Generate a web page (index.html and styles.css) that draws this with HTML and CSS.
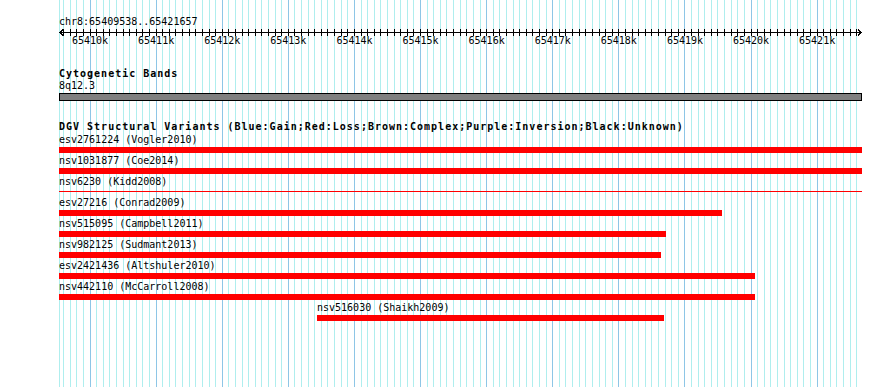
FILE: index.html
```html
<!DOCTYPE html>
<html lang="en">
<head>
  <meta charset="UTF-8">
  <meta name="viewport" content="width=device-width, initial-scale=1.0">
  <title>chr8:65409538..65421657</title>
  <link rel="stylesheet" href="styles.css">
</head>
<body>

<div class="browser">
  <div class="grid" id="grid"></div>

  <div class="tracks">
    <div class="ruler">
      <div class="locus">chr8:65409538..65421657</div>
      <svg class="axis" id="axis" width="803" height="8"></svg>
      <div class="ticklabels" id="ticklabels"></div>
    </div>

    <div class="track cyto">
      <div class="track-title">Cytogenetic Bands</div>
      <div class="band-name">8q12.3</div>
      <div class="band"></div>
    </div>

    <div class="track dgv">
      <div class="track-title">DGV Structural Variants (Blue:Gain;Red:Loss;Brown:Complex;Purple:Inversion;Black:Unknown)</div>
      <div id="features"></div>
    </div>
  </div>
</div>

<script>
  const START = 65409538, END = 65421657;
  const LEFT = 59.5, SCALE = 0.0661, EDGE = 59, RIGHT = 862;
  const px = bp => LEFT + (bp - START) * SCALE;

  const features = [
    { name: 'esv2761224', ref: 'Vogler2010', start: 65400000, end: 65430000 },
    { name: 'nsv1031877', ref: 'Coe2014', start: 65400000, end: 65430000 },
    { name: 'nsv6230', ref: 'Kidd2008', start: 65400000, end: 65430000, thin: true },
    { name: 'esv27216', ref: 'Conrad2009', start: 65400000, end: 65419560 },
    { name: 'nsv515095', ref: 'Campbell2011', start: 65400000, end: 65418714 },
    { name: 'nsv982125', ref: 'Sudmant2013', start: 65400000, end: 65418638 },
    { name: 'esv2421436', ref: 'Altshuler2010', start: 65400000, end: 65420060 },
    { name: 'nsv442110', ref: 'McCarroll2008', start: 65400000, end: 65420060 },
    { name: 'nsv516030', ref: 'Shaikh2009', start: 65413434, end: 65418683 }
  ];

  // grid lines + ruler ticks
  const grid = document.getElementById('grid');
  const axis = document.getElementById('axis');
  const ticklabels = document.getElementById('ticklabels');
  const ns = 'http://www.w3.org/2000/svg';
  let svg = '<line x1="1" y1="4.5" x2="802" y2="4.5"/>' +
            '<polyline points="4,1.5 1,4.5 4,7.5"/>' +
            '<polyline points="799,1.5 802,4.5 799,7.5"/>';

  const edgeLine = document.createElement('div');
  edgeLine.className = 'vline';
  edgeLine.style.left = EDGE + 'px';
  grid.appendChild(edgeLine);

  for (let bp = Math.ceil(START / 100) * 100; bp <= END; bp += 100) {
    const x = Math.floor(px(bp));
    const line = document.createElement('div');
    line.className = bp % 1000 === 0 ? 'vline major' : 'vline';
    line.style.left = x + 'px';
    grid.appendChild(line);

    const lx = x - EDGE + 0.5;
    svg += `<line x1="${lx}" y1="1" x2="${lx}" y2="8"/>`;

    if (bp % 1000 === 0) {
      const label = document.createElement('span');
      label.textContent = (bp / 1000) + 'k';
      label.style.left = (px(bp) - EDGE) + 'px';
      ticklabels.appendChild(label);
    }
  }
  axis.innerHTML = svg;

  // features
  const box = document.getElementById('features');
  features.forEach(f => {
    const x1 = Math.max(EDGE, Math.floor(px(f.start)));
    const x2 = Math.min(RIGHT, Math.round(px(f.end)));
    const row = document.createElement('div');
    row.className = 'feature';
    row.innerHTML = `<div class="feature-label">${f.name} (${f.ref})</div>` +
                    `<div class="feature-bar${f.thin ? ' thin' : ''}"></div>`;
    row.firstChild.style.marginLeft = (x1 - EDGE) + 'px';
    row.lastChild.style.marginLeft = (x1 - EDGE) + 'px';
    row.lastChild.style.width = (x2 - x1) + 'px';
    box.appendChild(row);
  });
</script>

</body>
</html>
```

FILE: styles.css
```css
body {
  margin: 0;
  font-family: "DejaVu Sans Mono", "Liberation Mono", monospace;
  font-size: 10px;
  color: #000;
  background: #fff;
}
.browser {
  width: 890px;
  height: 387px;
  position: relative;
  overflow: hidden;
}
.grid {
  position: absolute;
  top: 0;
  left: 0;
  right: 0;
  bottom: 0;
  z-index: 0;
}
.vline {
  position: absolute;
  top: 0;
  bottom: 0;
  width: 1px;
  background: #afeeee;
}
.vline.major {
  background: #8ec6e6;
}
.tracks {
  position: relative;
  z-index: 1;
  padding-left: 59px;
}
.ruler {
  padding-top: 16px;
}
.locus {
  line-height: 12px;
  white-space: nowrap;
}
.axis {
  display: block;
  stroke: #000;
  stroke-width: 1;
  fill: none;
  shape-rendering: crispEdges;
}
.ticklabels {
  position: relative;
  height: 12px;
  margin-top: -1px;
  line-height: 12px;
}
.ticklabels span {
  position: absolute;
  top: 0;
  transform: translateX(-50%);
  white-space: nowrap;
}
.cyto {
  margin-top: 21px;
}
.track-title {
  font-weight: bold;
  letter-spacing: 1px;
  line-height: 12px;
  white-space: nowrap;
}
.band-name {
  line-height: 12px;
}
.band {
  width: 803px;
  height: 8px;
  margin-top: 1px;
  box-sizing: border-box;
  border: 1px solid #000;
  background: #808080;
}
.dgv {
  margin-top: 20px;
}
.dgv .track-title {
  margin-bottom: 1px;
}
.feature {
  height: 21px;
}
.feature-label {
  line-height: 12px;
  white-space: nowrap;
}
.feature-bar {
  height: 6px;
  margin-top: 1px;
  background: #ff0000;
}
.feature-bar.thin {
  height: 1px;
  margin-top: 3px;
}
```
